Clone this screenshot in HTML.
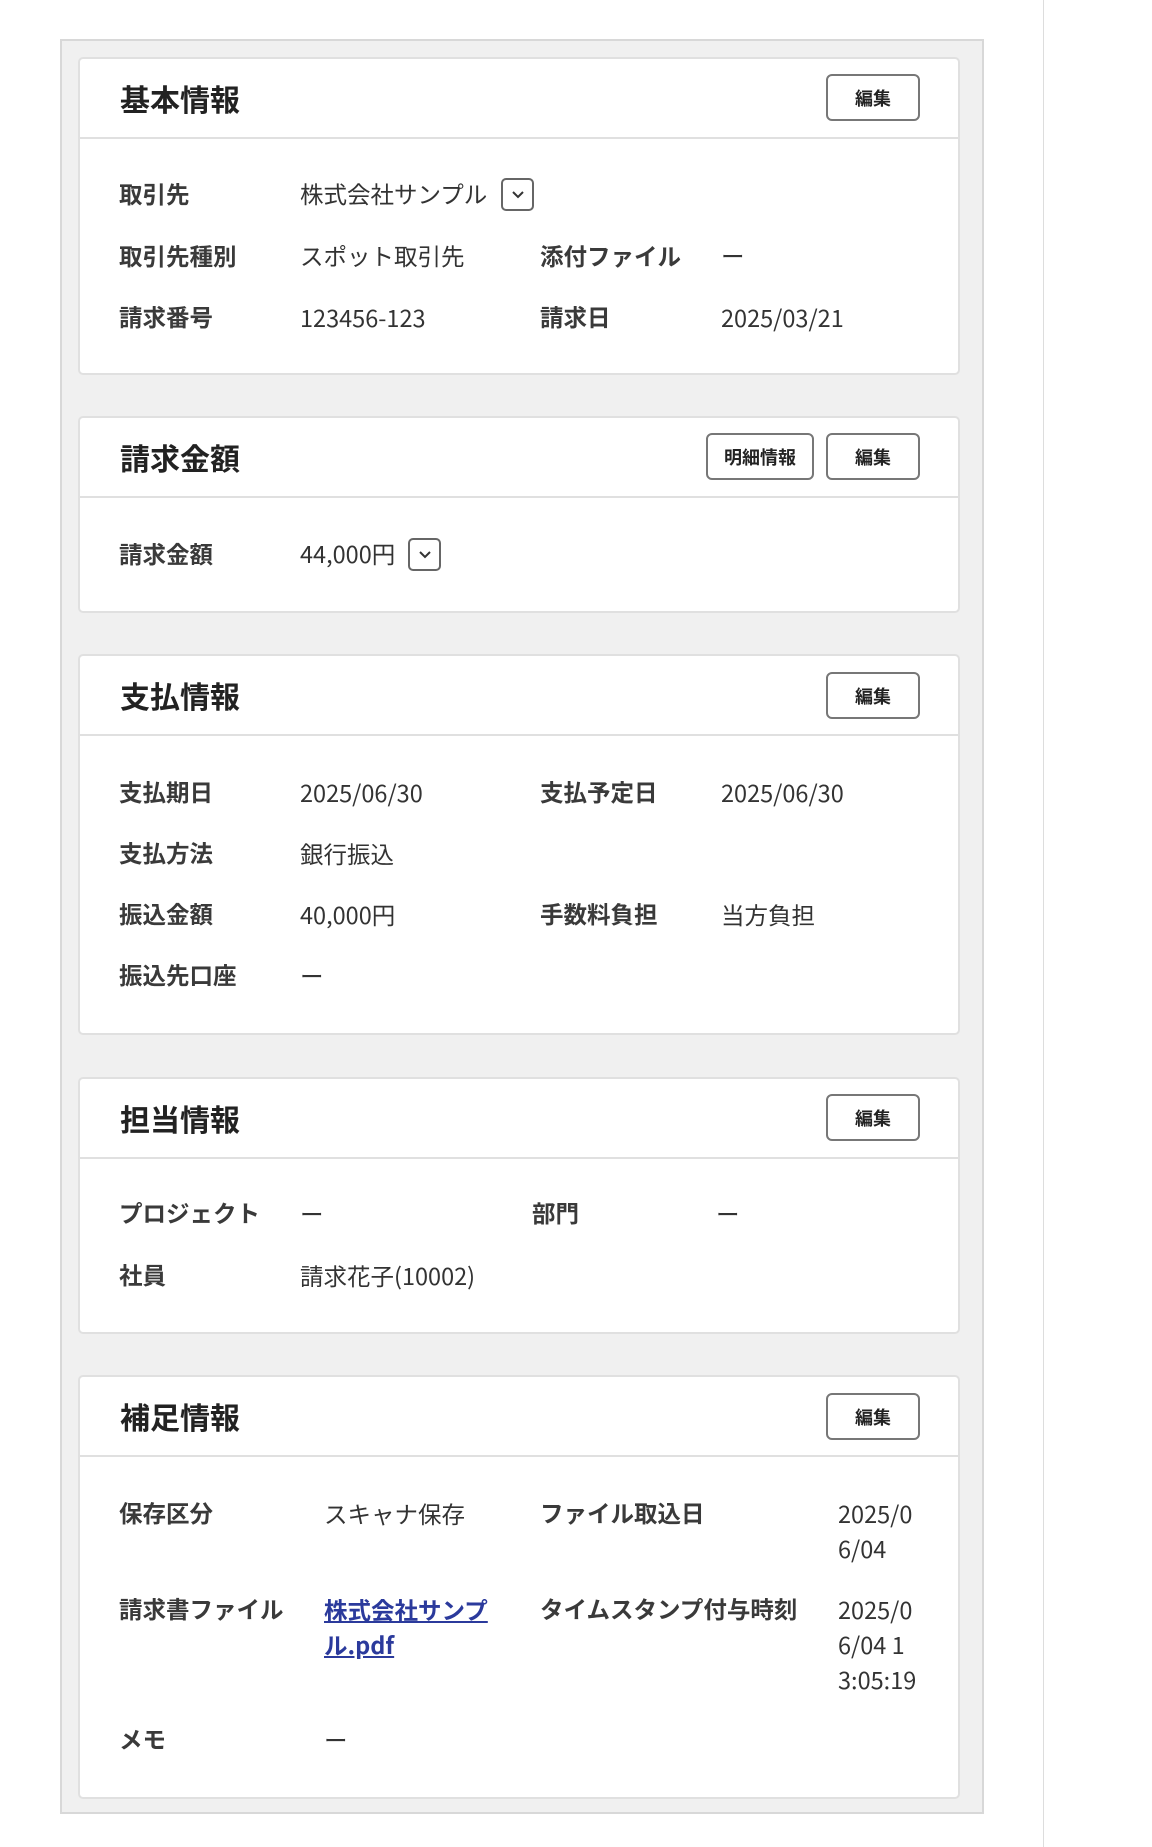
<!DOCTYPE html>
<html><head><meta charset="utf-8"><style>
*{margin:0;padding:0;box-sizing:border-box}
body{width:1152px;height:1847px;background:#fff;font-family:"Noto Sans CJK JP","Liberation Sans",sans-serif;color:#333;position:relative;overflow:hidden}
.vl{position:absolute;left:1043px;top:0;width:1px;height:1847px;background:#ddd}
.outer{position:absolute;left:60px;top:39px;width:924px;height:1775px;background:#f0f0f0;border:2px solid #d8d8d8}
.card{position:absolute;left:78px;width:882px;background:#fff;border:2px solid #e0e0e0;border-radius:5px}
.hd{position:absolute;left:0;right:0;top:0;border-bottom:2px solid #e0e0e0}
.t{position:absolute;left:40px;font-size:30px;font-weight:bold;color:#222;line-height:40px}
.btn{position:absolute;height:47px;border:2px solid #777;border-radius:6px;font-size:18px;font-weight:bold;color:#222;display:flex;align-items:center;justify-content:center;background:#fff}
.a{position:absolute;font-size:23.5px;line-height:35px;white-space:nowrap}
.l{font-weight:bold;color:#3a3a3a}
.v{color:#333}
.chev{position:absolute;width:33px;height:33px;border:2px solid #666;border-radius:5px}
.chev svg{position:absolute;left:8px;top:9px}
a{color:#2b3a9c;font-weight:bold;text-decoration:underline}
</style></head><body>
<div class="vl"></div>
<div class="outer"></div>

<div class="card" style="top:57px;height:318px">
<div class="hd" style="height:80px"></div>
<div class="t" style="top:19px">基本情報</div>
<div class="btn" style="left:746px;top:15px;width:94px">編集</div>
</div>
<div class="a l" style="left:119px;top:176px">取引先</div>
<div class="a v" style="left:300px;top:176px">株式会社サンプル</div>
<div class="chev" style="left:501px;top:178px"><svg width="14" height="12" viewBox="0 0 14 12"><path d="M2 3l5 5 5-5" fill="none" stroke="#333" stroke-width="2"/></svg></div>
<div class="a l" style="left:119px;top:238px">取引先種別</div>
<div class="a v" style="left:300px;top:238px">スポット取引先</div>
<div class="a l" style="left:540px;top:238px">添付ファイル</div>
<div class="a v" style="left:721px;top:238px">ー</div>
<div class="a l" style="left:119px;top:299px">請求番号</div>
<div class="a v" style="left:300px;top:300px">123456-123</div>
<div class="a l" style="left:540px;top:299px">請求日</div>
<div class="a v" style="left:721px;top:300px">2025/03/21</div>

<div class="card" style="top:416px;height:197px">
<div class="hd" style="height:80px"></div>
<div class="t" style="top:19px">請求金額</div>
<div class="btn" style="left:626px;top:15px;width:108px">明細情報</div>
<div class="btn" style="left:746px;top:15px;width:94px">編集</div>
</div>
<div class="a l" style="left:119px;top:536px">請求金額</div>
<div class="a v" style="left:300px;top:536px">44,000円</div>
<div class="chev" style="left:408px;top:538px"><svg width="14" height="12" viewBox="0 0 14 12"><path d="M2 3l5 5 5-5" fill="none" stroke="#333" stroke-width="2"/></svg></div>

<div class="card" style="top:654px;height:381px">
<div class="hd" style="height:80px"></div>
<div class="t" style="top:19px">支払情報</div>
<div class="btn" style="left:746px;top:16px;width:94px">編集</div>
</div>
<div class="a l" style="left:119px;top:774px">支払期日</div>
<div class="a v" style="left:300px;top:775px">2025/06/30</div>
<div class="a l" style="left:540px;top:774px">支払予定日</div>
<div class="a v" style="left:721px;top:775px">2025/06/30</div>
<div class="a l" style="left:119px;top:835px">支払方法</div>
<div class="a v" style="left:300px;top:836px">銀行振込</div>
<div class="a l" style="left:119px;top:896px">振込金額</div>
<div class="a v" style="left:300px;top:897px">40,000円</div>
<div class="a l" style="left:540px;top:896px">手数料負担</div>
<div class="a v" style="left:721px;top:897px">当方負担</div>
<div class="a l" style="left:119px;top:957px">振込先口座</div>
<div class="a v" style="left:300px;top:958px">ー</div>

<div class="card" style="top:1077px;height:257px">
<div class="hd" style="height:80px"></div>
<div class="t" style="top:19px">担当情報</div>
<div class="btn" style="left:746px;top:15px;width:94px">編集</div>
</div>
<div class="a l" style="left:119px;top:1195px">プロジェクト</div>
<div class="a v" style="left:300px;top:1196px">ー</div>
<div class="a l" style="left:532px;top:1195px">部門</div>
<div class="a v" style="left:716px;top:1196px">ー</div>
<div class="a l" style="left:119px;top:1257px">社員</div>
<div class="a v" style="left:300px;top:1258px">請求花子(10002)</div>

<div class="card" style="top:1375px;height:424px">
<div class="hd" style="height:80px"></div>
<div class="t" style="top:19px">補足情報</div>
<div class="btn" style="left:746px;top:16px;width:94px">編集</div>
</div>
<div class="a l" style="left:119px;top:1495px">保存区分</div>
<div class="a v" style="left:324px;top:1496px">スキャナ保存</div>
<div class="a l" style="left:540px;top:1495px">ファイル取込日</div>
<div class="a v" style="left:838px;top:1496px">2025/0<br>6/04</div>
<div class="a l" style="left:119px;top:1591px">請求書ファイル</div>
<div class="a" style="left:324px;top:1592px"><a>株式会社サンプ</a><br><a>ル.pdf</a></div>
<div class="a l" style="left:540px;top:1591px">タイムスタンプ付与時刻</div>
<div class="a v" style="left:838px;top:1592px">2025/0<br>6/04 1<br>3:05:19</div>
<div class="a l" style="left:119px;top:1721px">メモ</div>
<div class="a v" style="left:324px;top:1722px">ー</div>
</body></html>
